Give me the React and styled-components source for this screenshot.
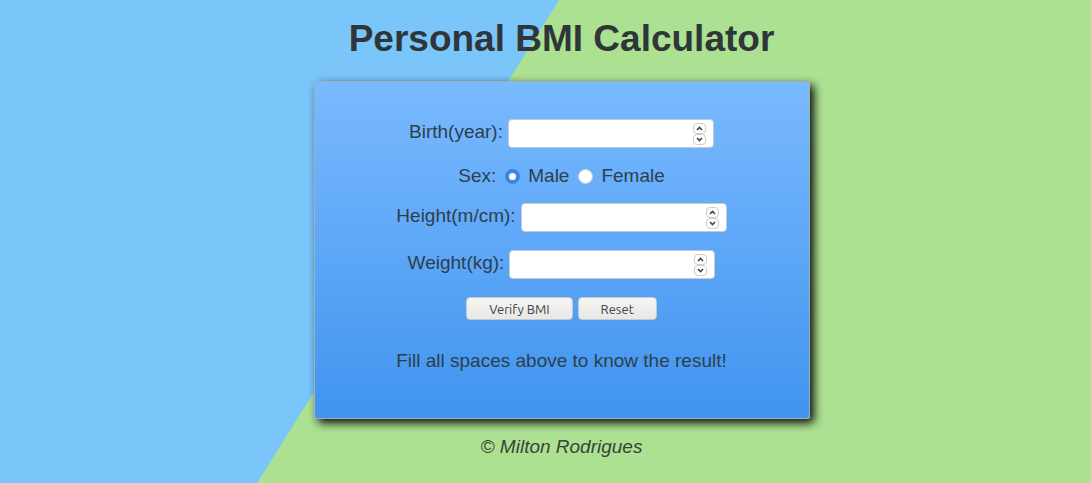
import React, { useRef, useState } from "react";
import styled, { createGlobalStyle } from "styled-components";

const GlobalStyle = createGlobalStyle`
  *, *::before, *::after { box-sizing: border-box; }
  body {
    margin: 0;
    color: #2f3639;
    font-family: "Liberation Sans", Arial, sans-serif;
    font-size: 19px;
    line-height: 24px;
  }
`;

const Page = styled.div`
  min-height: 100vh;
  display: flex;
  flex-direction: column;
  align-items: center;
  padding: 17px 16px 16px 48px;
  background: linear-gradient(122deg, #7ac6fa calc(50% - 117px), #ade192 calc(50% - 116px));
`;

const Title = styled.h1`
  margin: 0 0 20px;
  font-size: 37px;
  line-height: 44px;
  text-align: center;
`;

const Card = styled.main`
  width: 100%;
  max-width: 496px;
  padding: 37px 16px 45px;
  border: 1px solid #9fb0bd;
  border-radius: 3px;
  background: linear-gradient(#7abaff, #4094ef);
  box-shadow: 4px 4px 10px 0 rgba(0, 0, 0, 0.95);
  color: #2d3f4c;
`;

const Form = styled.form`
  display: flex;
  flex-direction: column;
  align-items: center;
`;

const Row = styled.div`
  display: flex;
  align-items: flex-start;
  justify-content: center;
  gap: 5px;
  margin-bottom: 18px;
`;

const Label = styled.label`
  line-height: 26px;
`;

const SexRow = styled.fieldset`
  display: flex;
  align-items: center;
  gap: 9px;
  min-width: 0;
  margin: 0 0 17px;
  padding: 0;
  border: 0;
  line-height: 20px;
`;

const Choice = styled.label`
  display: flex;
  align-items: center;
  gap: 8px;
`;

const Radio = styled.input`
  appearance: none;
  width: 15px;
  height: 15px;
  margin: 0;
  border: 1px solid #c4ccd4;
  border-radius: 50%;
  background: #fff;

  &:checked {
    border: 4px solid #3d86e4;
  }
`;

const Field = styled.div`
  display: flex;
  align-items: center;
  width: 206px;
  height: 29px;
  padding: 0 7px 0 6px;
  border: 1px solid #c3cad2;
  border-radius: 4px;
  background: #fff;
`;

const NumberInput = styled.input`
  flex: 1;
  min-width: 0;
  padding: 0;
  border: 0;
  outline: 0;
  background: transparent;
  color: inherit;
  font: inherit;
  appearance: textfield;

  &::-webkit-inner-spin-button {
    appearance: none;
    margin: 0;
  }
`;

const Stepper = styled.div`
  display: flex;
  flex-direction: column;
`;

const StepButton = styled.button`
  display: flex;
  align-items: center;
  justify-content: center;
  width: 13px;
  height: 11px;
  padding: 0;
  border: 1px solid #d0cbc8;
  border-radius: 4px;
  background: #fff;
  color: #3f4244;
`;

const Actions = styled.div`
  display: flex;
  gap: 5px;
  margin-bottom: 29px;
`;

const Button = styled.button`
  height: 23px;
  padding: 0 22px;
  border: 1px solid #c6c9cc;
  border-radius: 4px;
  background: linear-gradient(#f6f5f4, #e9e7e6);
  color: #3d4245;
  font-family: Ubuntu, "Noto Sans", sans-serif;
  font-size: 13px;
  line-height: 16px;
`;

const Result = styled.p`
  margin: 0;
  text-align: center;
`;

const Footer = styled.footer`
  margin-top: 16px;
  color: #36443a;
  font-style: italic;
`;

function NumberRow({ id, label, step }) {
  const ref = useRef(null);
  return (
    <Row>
      <Label htmlFor={id}>{label}</Label>
      <Field>
        <NumberInput ref={ref} id={id} name={id} type="number" min="0" step={step} />
        <Stepper>
          <StepButton type="button" aria-label="Increase" onClick={() => ref.current.stepUp()}>
            <svg width="7" height="5" viewBox="0 0 7 5" fill="none" stroke="currentColor" strokeWidth="1.6">
              <path d="M1 4 3.500 1.500 6 4" />
            </svg>
          </StepButton>
          <StepButton type="button" aria-label="Decrease" onClick={() => ref.current.stepDown()}>
            <svg width="7" height="5" viewBox="0 0 7 5" fill="none" stroke="currentColor" strokeWidth="1.6">
              <path d="M1 1 3.500 3.500 6 1" />
            </svg>
          </StepButton>
        </Stepper>
      </Field>
    </Row>
  );
}

const PROMPT = "Fill all spaces above to know the result!";

export default function App() {
  const [result, setResult] = useState(PROMPT);

  const verify = (event) => {
    event.preventDefault();
    const data = new FormData(event.currentTarget);
    const height = Number(data.get("height"));
    const weight = Number(data.get("weight"));
    if (!data.get("birth") || !height || !weight) {
      setResult(PROMPT);
      return;
    }
    const metres = height > 3 ? height / 100 : height;
    setResult(`BMI: ${(weight / (metres * metres)).toFixed(1)}`);
  };

  return (
    <>
      <GlobalStyle />
      <Page>
        <Title>Personal BMI Calculator</Title>
        <Card>
          <Form onSubmit={verify} onReset={() => setResult(PROMPT)}>
            <NumberRow id="birth" label="Birth(year):" step="1" />
            <SexRow aria-label="Sex">
              <span>Sex:</span>
              <Choice>
                <Radio type="radio" name="sex" value="male" defaultChecked />
                Male
              </Choice>
              <Choice>
                <Radio type="radio" name="sex" value="female" />
                Female
              </Choice>
            </SexRow>
            <NumberRow id="height" label="Height(m/cm):" step="1" />
            <NumberRow id="weight" label="Weight(kg):" step="1" />
            <Actions>
              <Button type="submit">Verify BMI</Button>
              <Button type="reset">Reset</Button>
            </Actions>
          </Form>
          <Result>{result}</Result>
        </Card>
        <Footer>© Milton Rodrigues</Footer>
      </Page>
    </>
  );
}
